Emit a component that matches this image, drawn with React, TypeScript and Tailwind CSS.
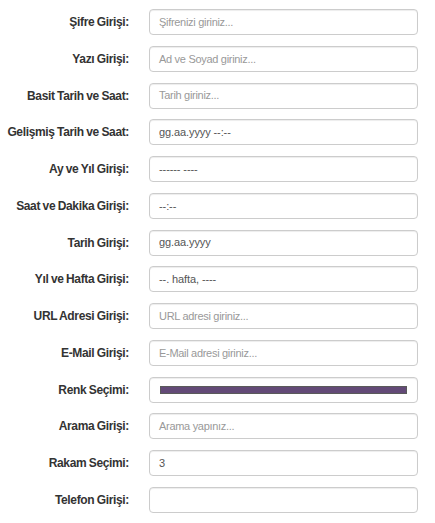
import { ReactNode } from 'react';

type Field = {
  label: string;
  placeholder?: string;
  value?: string;
  color?: boolean;
};

const fields: Field[] = [
  { label: 'Şifre Girişi:', placeholder: 'Şifrenizi giriniz...' },
  { label: 'Yazı Girişi:', placeholder: 'Ad ve Soyad giriniz...' },
  { label: 'Basit Tarih ve Saat:', placeholder: 'Tarih giriniz...' },
  { label: 'Gelişmiş Tarih ve Saat:', value: 'gg.aa.yyyy --:--' },
  { label: 'Ay ve Yıl Girişi:', value: '------ ----' },
  { label: 'Saat ve Dakika Girişi:', value: '--:--' },
  { label: 'Tarih Girişi:', value: 'gg.aa.yyyy' },
  { label: 'Yıl ve Hafta Girişi:', value: '--. hafta, ----' },
  { label: 'URL Adresi Girişi:', placeholder: 'URL adresi giriniz...' },
  { label: 'E-Mail Girişi:', placeholder: 'E-Mail adresi giriniz...' },
  { label: 'Renk Seçimi:', color: true },
  { label: 'Arama Girişi:', placeholder: 'Arama yapınız...' },
  { label: 'Rakam Seçimi:', value: '3' },
  { label: 'Telefon Girişi:' },
];

function InputBox({ children }: { children?: ReactNode }) {
  return (
    <div className="flex h-[26px] items-center rounded-[4px] border border-[#cccccc] bg-white pl-[9px] pr-[10px] shadow-[inset_0_1px_1px_rgba(0,0,0,0.075)]">
      {children}
    </div>
  );
}

function FieldInput({ field }: { field: Field }) {
  if (field.color) {
    return (
      <InputBox>
        <div className="ml-[1px] h-[8px] w-full border border-[#5a5a5a] bg-[#634a77]" />
      </InputBox>
    );
  }
  if (field.value) {
    return (
      <InputBox>
        <span className="whitespace-pre text-[11px] tracking-[-0.1px] text-[#555555]">{field.value}</span>
      </InputBox>
    );
  }
  return (
    <InputBox>
      {field.placeholder && (
        <span className="text-[11px] tracking-[-0.3px] text-[#999999]">{field.placeholder}</span>
      )}
    </InputBox>
  );
}

export default function App() {
  return (
    <div
      className="min-h-[523px] w-[435px] bg-white pt-[9px] pr-[17px]"
      style={{ fontFamily: '"Liberation Sans", Arial, sans-serif' }}
    >
      <div className="grid grid-cols-[129px_1fr] gap-x-[20px] gap-y-[10.77px]">
        {fields.map((field) => (
          <div key={field.label} className="contents">
            <label className="flex h-[26px] items-center justify-end whitespace-pre text-[12px] font-bold tracking-[-0.35px] text-[#333333] [word-spacing:-0.5px]">
              {field.label}
            </label>
            <FieldInput field={field} />
          </div>
        ))}
      </div>
    </div>
  );
}
